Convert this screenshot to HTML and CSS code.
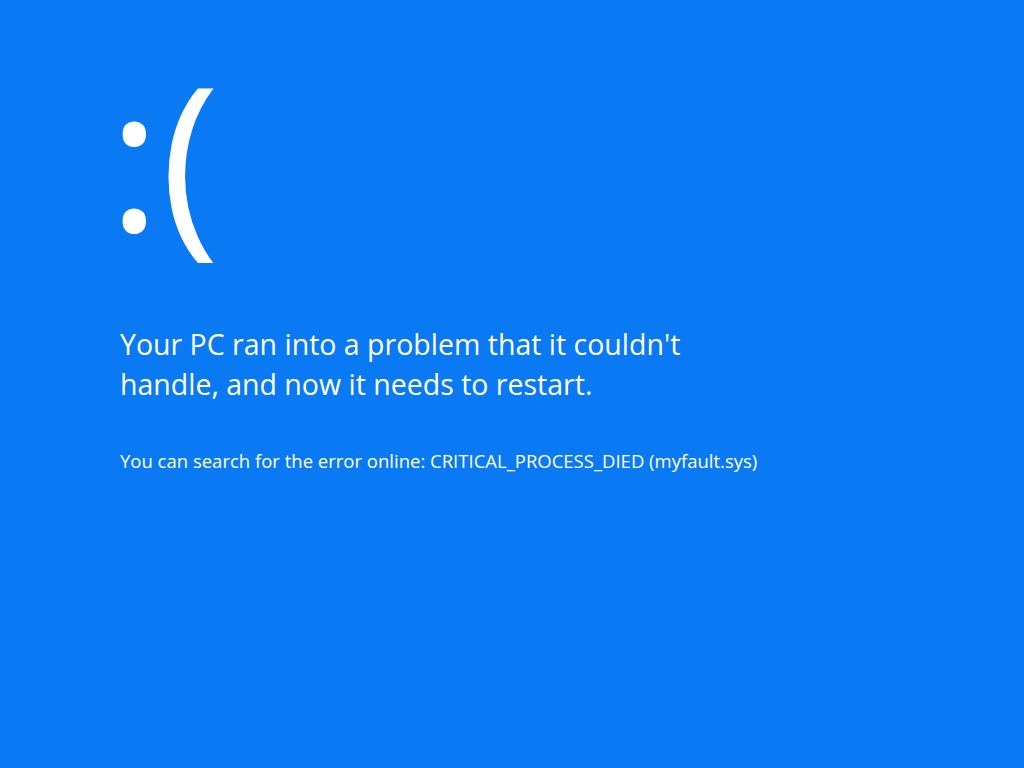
FILE: index.html
```html
<!DOCTYPE html>
<html>
<head>
<meta charset="utf-8">
<link rel="stylesheet" href="styles.css">
</head>
<body>
<main class="screen">
  <div class="face">:(</div>
  <p class="message">Your PC ran into a problem that it couldn't<br>handle, and now it needs to restart.</p>
  <p class="details">You can search for the error online: CRITICAL_PROCESS_DIED (myfault.sys)</p>
</main>
</body>
</html>
```
FILE: styles.css
```css
html, body {
  margin: 0;
  padding: 0;
  width: 1024px;
  height: 768px;
  background: #0a79f4;
  overflow: hidden;
}
.screen {
  padding: 29px 0 0 120px;
  color: #ffffff;
  font-family: "Open Sans", "Noto Sans", sans-serif;
}
.face {
  font-size: 200px;
  font-weight: 400;
  line-height: 250px;
  margin-left: -12px;
}
.message {
  margin: 45px 0 0 0;
  font-size: 28.5px;
  line-height: 40px;
  font-weight: 400;
}
.details {
  margin: 44px 0 0 0;
  font-size: 18.5px;
  line-height: 26px;
}
```
